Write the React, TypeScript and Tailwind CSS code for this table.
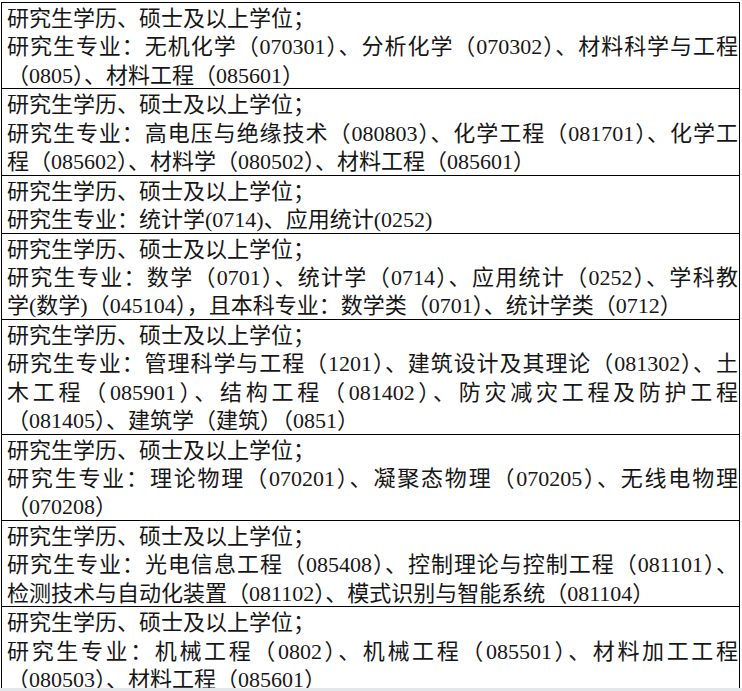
import React from "react";

type Line = { t: string; j?: boolean };

const rows: Line[][] = [
  [
    { t: "研究生学历、硕士及以上学位；" },
    { t: "研究生专业：无机化学（070301）、分析化学（070302）、材料科学与工程", j: true },
    { t: "（0805）、材料工程（085601）" },
  ],
  [
    { t: "研究生学历、硕士及以上学位；" },
    { t: "研究生专业：高电压与绝缘技术（080803）、化学工程（081701）、化学工", j: true },
    { t: "程（085602）、材料学（080502）、材料工程（085601）" },
  ],
  [
    { t: "研究生学历、硕士及以上学位；" },
    { t: "研究生专业：统计学(0714)、应用统计(0252)" },
  ],
  [
    { t: "研究生学历、硕士及以上学位；" },
    { t: "研究生专业：数学（0701）、统计学（0714）、应用统计（0252）、学科教", j: true },
    { t: "学(数学)（045104），且本科专业：数学类（0701）、统计学类（0712）" },
  ],
  [
    { t: "研究生学历、硕士及以上学位；" },
    { t: "研究生专业：管理科学与工程（1201）、建筑设计及其理论（081302）、土", j: true },
    { t: "木工程（085901）、结构工程（081402）、防灾减灾工程及防护工程", j: true },
    { t: "（081405）、建筑学（建筑）（0851）" },
  ],
  [
    { t: "研究生学历、硕士及以上学位；" },
    { t: "研究生专业：理论物理（070201）、凝聚态物理（070205）、无线电物理", j: true },
    { t: "（070208）" },
  ],
  [
    { t: "研究生学历、硕士及以上学位；" },
    { t: "研究生专业：光电信息工程（085408）、控制理论与控制工程（081101）、", j: true },
    { t: "检测技术与自动化装置（081102）、模式识别与智能系统（081104）" },
  ],
  [
    { t: "研究生学历、硕士及以上学位；" },
    { t: "研究生专业：机械工程（0802）、机械工程（085501）、材料加工工程", j: true },
    { t: "（080503）、材料工程（085601）" },
  ],
];

export default function App() {
  return (
    <div
      lang="zh-CN"
      className="relative h-[691px] w-[742px] overflow-hidden bg-white text-[#161616]"
      style={{ fontFamily: '"Liberation Serif", "Noto Sans CJK SC", serif' }}
    >
      <div className="ml-[1px] mt-[2px] w-[739px] border-t border-black">
        {rows.map((r, i) => (
          <div
            key={i}
            className="border-x border-b border-black pl-[5px] pr-[1px] text-[22px] leading-[28.43px]"
          >
            {r.map((l, k) => (
              <div
                key={k}
                className={
                  l.j
                    ? "whitespace-nowrap text-justify [text-align-last:justify]"
                    : "whitespace-nowrap"
                }
              >
                <span className="relative top-[2px]">{l.t}</span>
              </div>
            ))}
          </div>
        ))}
      </div>
      <div className="absolute bottom-0 left-0 h-[3px] w-full bg-[#e4e7ea]" />
    </div>
  );
}
